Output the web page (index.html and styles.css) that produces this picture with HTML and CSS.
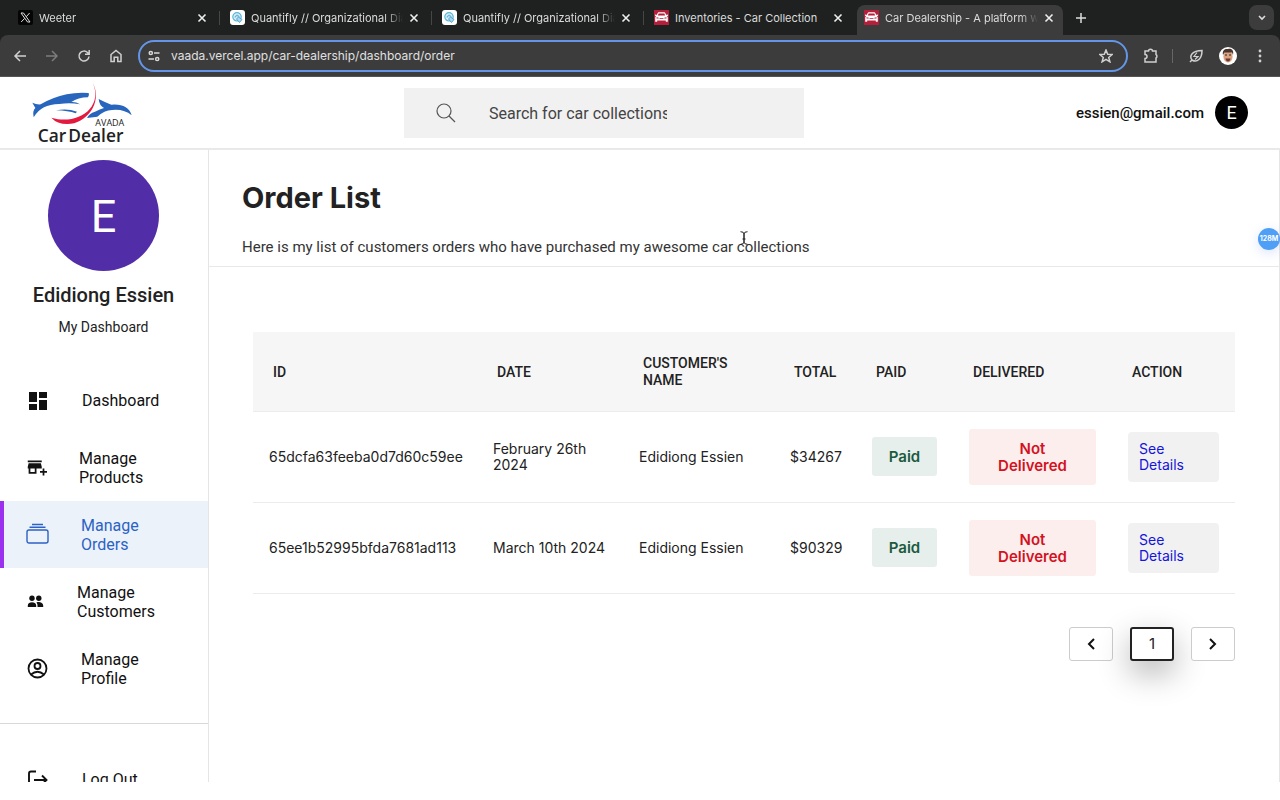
FILE: index.html
```html
<!DOCTYPE html>
<html lang="en">
<head>
<meta charset="utf-8">
<meta name="viewport" content="width=device-width, initial-scale=1">
<title>Car Dealership - Orders</title>
<link rel="stylesheet" href="styles.css">
</head>
<body>
<svg class="defs" aria-hidden="true">
  <symbol id="close" viewBox="0 0 10 10"><path d="M1.5 1.5l7 7M8.5 1.5l-7 7" fill="none" stroke="currentColor" stroke-width="1.6"/></symbol>
  <symbol id="quant" viewBox="0 0 15 15"><rect width="15" height="15" rx="3" fill="#fff"/><circle cx="7" cy="6.8" r="4.2" fill="#d8f0f8" stroke="#5cb5d8" stroke-width="1.2"/><path d="M5 7.5c0-3 4-3 4-.5M6.5 9l2-2 3.500 2.500-2.500 3z" fill="#a8d8ee" stroke="#4a9fce" stroke-width=".9"/></symbol>
  <symbol id="car" viewBox="0 0 15 15"><rect width="15" height="15" fill="#b51f3b"/><path d="M.8 4.800l1.400-.3.5.8 1-2.300c.2-.5.5-.7 1-.7h5.600c.5 0 .8.200 1 .7l1 2.300.5-.8 1.400.3-.5 1.200-.8.2c.7.5.9 1 .9 1.800v3.800h-2v-1.200H3.200v1.200h-2V8c0-.8.200-1.300.9-1.800l-.8-.2z" fill="#fff"/><path d="M4.600 3.600h5.800l.7 2H3.900zM2.500 7.200l2.200.5v.9l-2.200-.2zM12.500 7.200l-2.200.5v.9l2.200-.2zM5.500 8.300h4v.8h-4z" fill="#b51f3b"/></symbol>
</svg>
<div class="browser">
  <div class="tabs">
    <div class="tab"><svg class="favicon" viewBox="0 0 15 15"><rect width="15" height="15" rx="2" fill="#050505"/><path d="M3 3h2.500L12 12H9.500zM11.600 3L8.200 6.800M6.600 8.400L3.200 12" fill="none" stroke="#ddd"/></svg><span class="tab-title">Weeter</span><button class="tab-close" aria-label="Close tab"><svg><use href="#close"/></svg></button></div>
    <div class="tab"><svg class="favicon"><use href="#quant"/></svg><span class="tab-title">Quantifly // Organizational Diagram</span><button class="tab-close" aria-label="Close tab"><svg><use href="#close"/></svg></button></div>
    <div class="tab"><svg class="favicon"><use href="#quant"/></svg><span class="tab-title">Quantifly // Organizational Diagram</span><button class="tab-close" aria-label="Close tab"><svg><use href="#close"/></svg></button></div>
    <div class="tab"><svg class="favicon"><use href="#car"/></svg><span class="tab-title tab-full">Inventories - Car Collection</span><button class="tab-close" aria-label="Close tab"><svg><use href="#close"/></svg></button></div>
    <div class="tab tab-active"><svg class="favicon"><use href="#car"/></svg><span class="tab-title">Car Dealership - A platform where</span><button class="tab-close" aria-label="Close tab"><svg><use href="#close"/></svg></button></div>
    <button class="new-tab" aria-label="New tab"><svg width="10" height="10" viewBox="0 0 10 10"><path d="M5 0v10M0 5h10" stroke="currentColor" stroke-width="1.500"/></svg></button>
    <button class="tab-list" aria-label="Search tabs"><svg width="8" height="6" viewBox="0 0 8 6"><path d="M1 1l3 3 3-3" fill="none" stroke="currentColor" stroke-width="1.600"/></svg></button>
  </div>
  <div class="toolbar">
    <button class="tool" aria-label="Back"><svg viewBox="0 0 14 14"><path d="M13 7H2M7 2L2 7l5 5"/></svg></button>
    <button class="tool tool-off" aria-label="Forward"><svg viewBox="0 0 14 14"><path d="M1 7h11M7 2l5 5-5 5"/></svg></button>
    <button class="tool" aria-label="Reload"><svg viewBox="0 0 14 14"><path d="M12 7.500A5 5 0 1 1 10.500 3.500L12 5M12.200 1v4.200H8"/></svg></button>
    <button class="tool" aria-label="Home"><svg viewBox="0 0 14 14"><path d="M2 12.500V5.500L7 1.500l5 4v7H8.800V8.200H5.200v4.300z"/></svg></button>
    <div class="address">
      <svg class="site" width="12" height="12" viewBox="0 0 12 12" fill="none" stroke="#d8d8d8" stroke-width="1.500"><circle cx="2.800" cy="3" r="1.600"/><path d="M6 3h5.500M.5 9H6"/><circle cx="9.200" cy="9" r="1.600"/></svg>
      <input class="url" type="text" aria-label="Address" value="vaada.vercel.app/car-dealership/dashboard/order">
      <button class="tool star" aria-label="Bookmark"><svg viewBox="0 0 14 14"><path d="M7 1l1.700 4.200 4.500.3-3.500 2.900 1.200 4.400L7 10.300l-3.900 2.500 1.200-4.400L.8 5.500l4.500-.3z"/></svg></button>
    </div>
    <button class="tool ext" aria-label="Extensions"><svg viewBox="0 0 16 16"><path d="M2 3h3.500a2 1.800 0 0 1 4 0H13v3.500a1.800 2 0 0 1 0 3.500v4H2v-3.500a2 2 0 0 0 0-4z"/></svg></button>
    <span class="tool-sep"></span>
    <button class="tool leaf" aria-label="Energy saver"><svg viewBox="0 0 14 14"><path d="M1 13l2-2C0 7 3 1.500 13 1.500 13 10 8 14 3 11"/><path d="M8 3.500L5 7.500h4l-3 3" stroke-width="1.200"/></svg></button>
    <button class="me" aria-label="Profile"><svg width="18" height="18" viewBox="0 0 18 18"><circle cx="9" cy="9" r="9" fill="#fff"/><ellipse cx="9" cy="9.500" rx="4.600" ry="6" fill="#d9a283"/><path d="M4 8C3 3 6 1.500 9 2c4-1 6 2 5 6l-1-2.500H5.500z" fill="#49352d"/><path d="M6 8h2M10 8h2" stroke="#33251f" stroke-width="1.200"/><path d="M6.500 11.500h5q-.5 3-2.500 3t-2.500-3z" fill="#6b3832"/></svg></button>
    <button class="tool dots" aria-label="Menu"><svg viewBox="0 0 14 14"><g fill="currentColor" stroke="none"><circle cx="7" cy="2" r="1.400"/><circle cx="7" cy="7" r="1.400"/><circle cx="7" cy="12" r="1.400"/></g></svg></button>
  </div>
</div>

<header class="header">
  <a class="logo" href="#" aria-label="Avada Car Dealer">
    <svg width="102" height="64" viewBox="96 12 306 192">
      <path d="M97 77q12 6 25 5Q158 61 200 52q32-7 66-4 3 8-2 13-30 0-50 14 14-1 26 7-30-6-62-1-28 1-46 10-17 8-31 30-4-20 5-28z" fill="#2866bd"/>
      <path d="M168 100q34-7 63 4l-4 5q-22-8-59-9z" fill="#2866bd"/>
      <path d="M296 66q17 9 38 17 50-4 61 32-24-20-59-16-23 1-44 20l-31 4q6-14 24-19 15-8 27-11-14-7-16-27z" fill="#2866bd"/>
      <path d="M278 17c32 61-20 124-76 124q-31 0-48-19c78 24 158-30 124-105z" fill="#e3193f"/>
      <text x="286" y="148" class="logo-small">AVADA</text>
      <text x="113" y="195" class="logo-big">Car<tspan x="205">Dealer</tspan></text>
    </svg>
  </a>
  <form class="search">
    <svg width="20" height="20" viewBox="0 0 20 20" fill="none" stroke="#555" stroke-width="1.200"><circle cx="8" cy="8" r="7"/><path d="M13 13l6 6"/></svg>
    <input type="text" aria-label="Search" placeholder="Search for car collections">
  </form>
  <div class="account"><span>essien@gmail.com</span><span class="account-badge">E</span></div>
</header>

<div class="page">
  <aside class="sidebar">
    <div class="profile">
      <div class="avatar">E</div>
      <h2>Edidiong Essien</h2>
      <p>My Dashboard</p>
    </div>
    <nav class="nav">
      <a href="#"><svg width="24" height="24" viewBox="0 0 24 24"><path d="M3 13h8V3H3v10zm0 8h8v-6H3v6zm10 0h8V11h-8v10zm0-18v6h8V3h-8z"/></svg><span>Dashboard</span></a>
      <a href="#"><svg width="21" height="21" viewBox="0 0 24 24"><path d="M18 4H2v2h16V4zM17.500 13h.5v-2l-1-4H3l-1 4v2h1v6h9v-6h3.500zM10 17H5v-4h5v4zM21 16v-3h-2v3h-3v2h3v3h2v-3h3v-2z"/></svg><span>Manage Products</span></a>
      <a href="#" class="current" aria-current="page"><svg width="23" height="23" viewBox="0 0 23 23" fill="none" stroke="currentColor" stroke-width="1.400"><rect x="1" y="7" width="21" height="13" rx="2"/><path d="M3.500 4.300h16M6 1.500h11"/></svg><span>Manage Orders</span></a>
      <a href="#"><svg width="19" height="19" viewBox="0 0 19 19"><circle cx="6" cy="6.200" r="2.700"/><circle cx="12.800" cy="6.200" r="2.700"/><path d="M1.800 15v-1.500c0-4.300 8.400-4.300 8.400 0V15zM11.500 15v-1.800q0-1.600-1.100-2.700c2.500-1.200 6.800-.1 6.800 3V15z"/></svg><span>Manage Customers</span></a>
      <a href="#"><svg width="23" height="23" viewBox="0 0 23 23" fill="none" stroke="currentColor" stroke-width="1.800"><circle cx="11.500" cy="11.500" r="9"/><circle cx="11.500" cy="9" r="3"/><path d="M5 17.500q6.500-5.500 13 0"/></svg><span>Manage Profile</span></a>
    </nav>
    <div class="nav nav-end">
      <a href="#"><svg width="24" height="24" viewBox="0 0 24 24" fill="none" stroke="currentColor" stroke-width="1.900"><path d="M10 3.500H5Q3 3.500 3 5.500v13q0 2 2 2h5M8 12h12M16 7.500l4.500 4.500-4.500 4.500"/></svg><span>Log Out</span></a>
    </div>
  </aside>
  <main class="main">
    <div class="intro">
      <h1>Order List</h1>
      <p>Here is my list of customers orders who have purchased my awesome car collections</p>
    </div>
    <section class="orders">
      <table>
        <colgroup><col class="c-id"><col class="c-date"><col class="c-name"><col class="c-total"><col class="c-paid"><col class="c-delivered"><col class="c-action"></colgroup>
        <thead><tr><th>ID</th><th>DATE</th><th>CUSTOMER'S NAME</th><th>TOTAL</th><th>PAID</th><th>DELIVERED</th><th>ACTION</th></tr></thead>
        <tbody>
          <tr><td>65dcfa63feeba0d7d60c59ee</td><td>February 26th 2024</td><td>Edidiong Essien</td><td>$34267</td><td><span class="pill paid">Paid</span></td><td><span class="pill pending">Not Delivered</span></td><td><a class="details" href="#">See<br>Details</a></td></tr>
          <tr><td>65ee1b52995bfda7681ad113</td><td>March 10th 2024</td><td>Edidiong Essien</td><td>$90329</td><td><span class="pill paid">Paid</span></td><td><span class="pill pending">Not Delivered</span></td><td><a class="details" href="#">See<br>Details</a></td></tr>
        </tbody>
      </table>
      <div class="pager">
        <button aria-label="Previous page"><svg width="8" height="12" viewBox="0 0 8 12"><path d="M7 1L2 6l5 5"/></svg></button>
        <button class="on">1</button>
        <button aria-label="Next page"><svg width="8" height="12" viewBox="0 0 8 12"><path d="M1 1l5 5-5 5"/></svg></button>
      </div>
    </section>
    <span class="memory">128M</span>
    <svg class="caret" width="8" height="14" viewBox="0 0 8 14"><path d="M.5.7Q4 .7 4 3v8q0 2.300-3.500 2.300M7.500.7Q4 .7 4 3v8q0 2.300 3.500 2.300M2.500 8h3" fill="none" stroke="#222"/></svg>
  </main>
</div>
</body>
</html>
```
FILE: styles.css
```css
* { box-sizing: border-box; }
body {
  margin: 0;
  height: 100vh;
  padding-bottom: 18px;
  display: flex;
  flex-direction: column;
  overflow: hidden;
  background: #fff;
  color: #222;
  font-family: Roboto, "Liberation Sans", sans-serif;
}
h1, h2, p { margin: 0; }
button { border: 0; padding: 0; background: none; font: inherit; color: inherit; }
a { color: inherit; text-decoration: none; }
svg { flex: none; }
.defs { position: absolute; width: 0; height: 0; }

/* Browser frame */
.browser { flex: none; background: #1f2120; color: #dcdcdc; font-family: Inter, sans-serif; }
.tabs { display: flex; height: 35px; padding: 0 6px; align-items: stretch; }
.tab { flex: 0 1 212px; min-width: 0; display: flex; align-items: center; gap: 6px; padding: 0 11px 0 12px; }
.tab + .tab { background: linear-gradient(#454746, #454746) 1px 50% / 1px 14px no-repeat; }
.favicon { width: 15px; height: 15px; }
.tab-title { flex: 1; overflow: hidden; white-space: nowrap; font-size: 11px; mask-image: linear-gradient(90deg, #000 88%, transparent 100%); }
.tab-title.tab-full { mask-image: none; }
.tab-close { display: flex; color: #eee; }
.tab-close svg { width: 10px; height: 10px; }
.tab.tab-active { background: #3c3c3c; border-radius: 8px 8px 0 0; margin-top: 5px; padding: 0 9px 5px 7px; flex-basis: 206px; margin-left: 3px; }
.new-tab { display: flex; align-items: center; padding: 0 13px; }
.tab-list { display: flex; align-items: center; justify-content: center; margin: 5px 0 5px auto; width: 25px; border-radius: 8px; background: #3c3c3c; }
.toolbar { display: flex; align-items: center; height: 42px; padding: 0 11px; background: #3c3c3c; border-radius: 8px 8px 0 0; border-bottom: 1px solid #555; }
.tool { display: flex; width: 32px; padding: 0 2px; color: #d0d0d0; }
.tool svg { width: 14px; height: 14px; fill: none; stroke: currentColor; stroke-width: 1.5px; }
.tool-off { color: #7c7c7c; }
.address { flex: 1; display: flex; align-items: center; height: 32px; padding: 0 0 0 8px; margin-left: -1px; border: 2px solid #6496e8; border-radius: 16px; gap: 11px; }
.url { flex: 1; min-width: 0; border: 0; outline: 0; padding: 0; background: none; color: #e0e0e0; font: 12px Inter, sans-serif; }
.tool.star { width: 29px; }
.ext { margin-left: 13px; width: 31px; }
.ext svg { width: 16px; height: 16px; }
.tool-sep { width: 1px; height: 14px; margin-right: 14px; background: #666; }
.me { display: flex; }
.tool.dots { padding-left: 16px; }

/* Site header */
.header { flex: none; height: 73px; display: flex; align-items: center; padding: 0 32px; border-bottom: 2px solid #e9e9e9; }
.logo { display: flex; width: 372px; }
.logo-small { font: 27px "Open Sans", sans-serif; fill: #222; }
.logo-big { font: 600 52px "Open Sans", sans-serif; fill: #222; }
.search { flex: 0 1 400px; height: 50px; display: flex; align-items: center; gap: 33px; padding-left: 32px; background: #f1f1f1; }
.search input { width: 178px; padding: 2px 0 0; border: 0; outline: 0; background: none; font: 16px Roboto, sans-serif; color: #444; }
.search input::placeholder { color: #444; opacity: 1; }
.account { display: flex; align-items: center; margin-left: auto; gap: 11px; font-size: 15px; font-weight: 500; color: #111; }
.account-badge { width: 33px; height: 33px; line-height: 33px; border-radius: 50%; background: #000; color: #fff; text-align: center; font-size: 18px; font-weight: 400; }

/* Sidebar */
.page { flex: 1; min-height: 0; display: flex; overflow: hidden; }
.sidebar { flex: none; width: 209px; border-right: 1px solid #e5e5e5; padding-top: 10px; }
.profile { display: flex; flex-direction: column; align-items: center; padding: 0 1px 28px 0; }
.avatar { width: 111px; height: 111px; line-height: 113px; border-radius: 50%; background: #512da8; color: #fff; text-align: center; font-size: 45px; }
.profile h2 { margin-top: 12px; font-size: 20px; line-height: 24px; font-weight: 500; }
.profile p { margin-top: 8px; font-size: 14px; line-height: 24px; }
.nav { color: #111; }
.nav a { display: flex; align-items: center; gap: 32px; height: 67px; padding-left: 26px; font-size: 16px; line-height: 19px; }
.nav a svg:not([fill]) { fill: currentColor; }
.nav span { width: 80px; }
.nav .current { background: #ecf2f9; color: #2b62c6; border-left: 4px solid #9b30ef; padding-left: 22px; }
.nav-end { margin-top: 21px; padding-top: 22px; border-top: 1px solid #d9d9d9; }

/* Orders */
.main { position: relative; flex: 1; min-width: 0; border-right: 1px solid #e5e5e5; }
.intro { padding: 30px 33px 6px; border-bottom: 1px solid #e9e9e9; }
.intro h1 { font: 700 29px/36px Inter, sans-serif; }
.intro p { margin-top: 19px; font-size: 15px; line-height: 25px; color: #333; }
.orders { padding: 65px 44px 0; font-family: Inter, sans-serif; }
table { width: 100%; table-layout: fixed; border-collapse: collapse; }
.c-id { width: 224px; }
.c-date { width: 146px; }
.c-name { width: 151px; }
.c-total { width: 82px; }
.c-paid { width: 97px; }
.c-delivered { width: 159px; }
.c-action { width: 123px; }
th { height: 79px; padding: 2px 20px 0; background: #f6f6f6; border-bottom: 1px solid #ececec; text-align: left; font: 500 14px/17px Roboto, sans-serif; }
td { height: 91px; padding: 0 16px; border-bottom: 1px solid #ececec; font-size: 14px; line-height: 16px; }
.pill { display: block; border-radius: 3px; text-align: center; font-size: 15px; font-weight: 600; line-height: 17px; padding: 11px 15px; }
.paid { background: #e7efec; color: #1c5a40; }
.pending { padding: 11px 24px; background: #fdeeee; color: #d3121f; }
.details { display: block; border-radius: 4px; padding: 9px 11px; background: #f1f1f1; color: #1414dc; }
.pager { display: flex; justify-content: flex-end; gap: 17px; padding-top: 33px; }
.pager button { display: flex; align-items: center; justify-content: center; width: 44px; height: 34px; border: 1px solid #ccc; border-radius: 3px; background: #fff; font-size: 15px; }
.pager svg { fill: none; stroke: #111; stroke-width: 2px; }
.pager .on { border: 2px solid #222; box-shadow: 0 12px 32px rgba(0, 0, 0, .3); }
.memory { position: absolute; top: 78px; right: -1px; width: 22px; height: 22px; border-radius: 50%; background: #4f9ff6; color: #fff; text-align: center; font: 700 7px/22px Inter, sans-serif; box-shadow: 0 3px 12px rgba(80, 120, 240, .2); }
.caret { position: absolute; top: 81px; left: 531px; }
```
